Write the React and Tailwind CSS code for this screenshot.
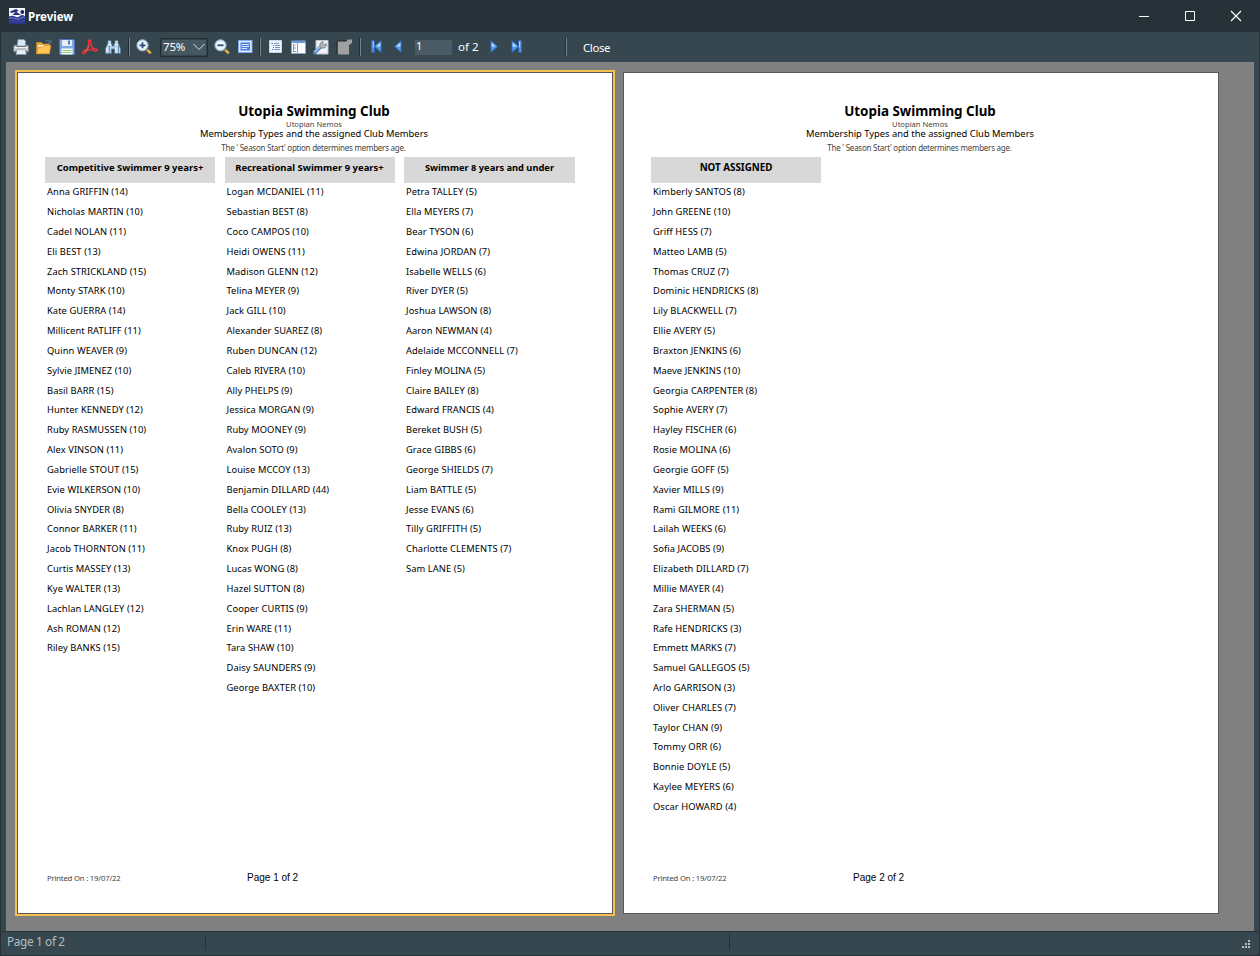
import React from "react";

const competitive = "Anna GRIFFIN (14)|Nicholas MARTIN (10)|Cadel NOLAN (11)|Eli BEST (13)|Zach STRICKLAND (15)|Monty STARK (10)|Kate GUERRA (14)|Millicent RATLIFF (11)|Quinn WEAVER (9)|Sylvie JIMENEZ (10)|Basil BARR (15)|Hunter KENNEDY (12)|Ruby RASMUSSEN (10)|Alex VINSON (11)|Gabrielle STOUT (15)|Evie WILKERSON (10)|Olivia SNYDER (8)|Connor BARKER (11)|Jacob THORNTON (11)|Curtis MASSEY (13)|Kye WALTER (13)|Lachlan LANGLEY (12)|Ash ROMAN (12)|Riley BANKS (15)".split("|");
const recreational = "Logan MCDANIEL (11)|Sebastian BEST (8)|Coco CAMPOS (10)|Heidi OWENS (11)|Madison GLENN (12)|Telina MEYER (9)|Jack GILL (10)|Alexander SUAREZ (8)|Ruben DUNCAN (12)|Caleb RIVERA (10)|Ally PHELPS (9)|Jessica MORGAN (9)|Ruby MOONEY (9)|Avalon SOTO (9)|Louise MCCOY (13)|Benjamin DILLARD (44)|Bella COOLEY (13)|Ruby RUIZ (13)|Knox PUGH (8)|Lucas WONG (8)|Hazel SUTTON (8)|Cooper CURTIS (9)|Erin WARE (11)|Tara SHAW (10)|Daisy SAUNDERS (9)|George BAXTER (10)".split("|");
const juniors = "Petra TALLEY (5)|Ella MEYERS (7)|Bear TYSON (6)|Edwina JORDAN (7)|Isabelle WELLS (6)|River DYER (5)|Joshua LAWSON (8)|Aaron NEWMAN (4)|Adelaide MCCONNELL (7)|Finley MOLINA (5)|Claire BAILEY (8)|Edward FRANCIS (4)|Bereket BUSH (5)|Grace GIBBS (6)|George SHIELDS (7)|Liam BATTLE (5)|Jesse EVANS (6)|Tilly GRIFFITH (5)|Charlotte CLEMENTS (7)|Sam LANE (5)".split("|");
const unassigned = "Kimberly SANTOS (8)|John GREENE (10)|Griff HESS (7)|Matteo LAMB (5)|Thomas CRUZ (7)|Dominic HENDRICKS (8)|Lily BLACKWELL (7)|Ellie AVERY (5)|Braxton JENKINS (6)|Maeve JENKINS (10)|Georgia CARPENTER (8)|Sophie AVERY (7)|Hayley FISCHER (6)|Rosie MOLINA (6)|Georgie GOFF (5)|Xavier MILLS (9)|Rami GILMORE (11)|Lailah WEEKS (6)|Sofia JACOBS (9)|Elizabeth DILLARD (7)|Millie MAYER (4)|Zara SHERMAN (5)|Rafe HENDRICKS (3)|Emmett MARKS (7)|Samuel GALLEGOS (5)|Arlo GARRISON (3)|Oliver CHARLES (7)|Taylor CHAN (9)|Tommy ORR (6)|Bonnie DOYLE (5)|Kaylee MEYERS (6)|Oscar HOWARD (4)".split("|");

function Icon({ children, className = "" }) {
  return (
    <svg viewBox="0 0 16 16" className={"h-4 w-4 shrink-0 " + className}>
      {children}
    </svg>
  );
}

function Separator({ className }) {
  return <div className={"h-[18px] w-[2px] shrink-0 border-l border-[#222e34] bg-[#71828b] " + className} />;
}

function Logo() {
  return (
    <Icon>
      <rect width="16" height="16" fill="#f4f6fb" />
      <path d="M0 8.500 Q3 7 6 8.500 T11 8 T16 8.500 V16 H0Z" fill="#2c3590" />
      <path d="M0 10.500 Q3 8.800 6 10.500 T12 10 T16 10.500" stroke="#8d95d0" strokeWidth=".8" fill="none" />
      <path d="M0 13.500 Q3 12 7 13 T16 12.500" stroke="#4a53a8" strokeWidth=".8" fill="none" />
      <path d="M1 3.500 L7 1 L9.500 2.500 L7.500 4 L12 7 L3.500 7 L6.500 4 L2 5Z" fill="#272f7c" />
      <circle cx="13.300" cy="4" r="1.900" fill="#1b2266" />
    </Icon>
  );
}

function Printer() {
  return (
    <Icon>
      <path d="M4 7 L5 .5 H11 L12.500 2 V7Z" fill="#d3e9fc" stroke="#7098bd" strokeWidth=".7" />
      <path d="M.5 8 Q.5 6 2.500 6 H4 V8 H12.500 V6 H14 Q15.700 6 15.700 8 V13 H.5Z" fill="#c3c7ca" stroke="#65696c" strokeWidth=".7" />
      <path d="M1.500 8.500 H14.700 M1.500 10.500 H14.700" stroke="#eff1f2" />
      <path d="M4 10.500 H12.300 L13.300 15.500 H3Z" fill="#e4f0fa" stroke="#8799a8" strokeWidth=".7" />
      <path d="M5 7.500H12M1.500 12H3.500M13 12H15" stroke="#777" />
    </Icon>
  );
}

function OpenFolder() {
  return (
    <Icon>
      <path d="M.5 14.500 V3.500 H5.500 L7 5 H13.500 V14.500Z" fill="#e5a83c" stroke="#c98722" strokeWidth=".7" />
      <path d="M2 6 H12.500 V12 H2Z" fill="#fff4cc" />
      <path d="M.5 14.700 L2.700 8 H6.500 L8 6.500 H14.800 L13.300 14.700Z" fill="#ffc65a" stroke="#df9625" strokeWidth=".8" />
      <path d="M9.500 2 Q12 .3 14 2.700 M14.800 .8 V4 H12" fill="none" stroke="#52799b" strokeWidth="1" />
    </Icon>
  );
}

function Save() {
  return (
    <Icon>
      <path d="M.5 .5 H14.500 L15.500 1.500 V15.500 H.5Z" fill="#7fa6e2" stroke="#4a74b6" />
      <path d="M3 1 H13 V7 H3Z" fill="#e4edf8" />
      <rect x="9" y="1.500" width="2" height="4" fill="#517dbf" />
      <rect x="2.500" y="9.500" width="11" height="6" fill="#f8fff6" />
      <path d="M3.500 11.500 H12.500 M3.500 13.500 H12.500" stroke="#91c97a" />
    </Icon>
  );
}

function Pdf() {
  return (
    <Icon>
      <path d="M1 14.500 Q-.3 12.500 4.500 10.500 Q7.500 6 6.500 1.800 Q7.500 .2 8.400 1.500 Q8.400 6.500 11 9.500 Q15.600 9.500 15 11.700 Q13 13 10 10.300 L5 11.200 Q2.500 15.700 1 14.500Z" fill="none" stroke="#e53535" strokeWidth="1.500" />
      <path d="M5.500 10.300 L8 6 M3 12.500 L5 11" stroke="#ff8373" strokeWidth=".6" />
    </Icon>
  );
}

function Binoculars() {
  return (
    <Icon>
      <path d="M3 1.500 H6 V4 L7 5 V7 H9 V5 L10 4 V1.500 H13 V4 L15.500 9.500 V14.500 H9.500 V10 H6.500 V14.500 H.5 V9.500 L3 4Z" fill="#b4d4ec" stroke="#557894" strokeWidth=".8" />
      <path d="M3.500 3 H5.500 M10.500 3 H12.500 M3 5.500 H6 M10 5.500 H13 M2 8.500 V13 M11 8.500 V13" stroke="#eff9ff" strokeWidth="1" />
      <path d="M4.500 7 V14 M13.500 7 V14" stroke="#7197b2" />
    </Icon>
  );
}

function Magnifier({ plus, className }) {
  return (
    <Icon className={className}>
      <path d="M10.500 10.500 L14.500 14.500" stroke="#916525" strokeWidth="3" />
      <path d="M11.500 11 L14.800 14.300" stroke="#e8bd5f" strokeWidth="2" />
      <circle cx="6.500" cy="6.300" r="5.600" fill="#cfe3f6" stroke="#9fb8cc" strokeWidth="1" />
      <circle cx="6.500" cy="6.300" r="4.200" fill="#edf7ff" />
      <path d={plus ? "M3.500 6.300 H9.500 M6.500 3.300 V9.300" : "M3.500 6.300 H9.500"} stroke="#294b77" strokeWidth="1.800" />
    </Icon>
  );
}

function FitPage() {
  return (
    <Icon className="ml-[8px]">
      <rect x=".5" y="1.500" width="13.500" height="12" fill="#dcecff" stroke="#7fabe8" />
      <rect x="2.500" y="3.500" width="9.500" height="8" fill="#4a7edf" />
      <path d="M3.500 5.500 H11 M3.500 7.500 H11 M3.500 9.500 H9" stroke="#d4e5ff" strokeWidth="1" />
    </Icon>
  );
}

function Outline() {
  return (
    <Icon className="ml-[6px]">
      <path d="M2.500 1.500 H14.500 V13.500 H2.500Z" fill="#eef4fb" stroke="#c9d6e6" />
      <path d="M7 4.500 H12 M8 6.500 H13 M8 8.500 H13 M7 10.500 H13" stroke="#7798c5" />
      <path d="M4.500 4.500 H6 M6 6.500 H7 M6 8.500 H7 M5 10.500 H6" stroke="#416fb5" />
    </Icon>
  );
}

function Thumbnails() {
  return (
    <Icon className="ml-[7px]">
      <path d="M1.500 2 H15.500 V14.500 H1.500Z" fill="#f6faff" stroke="#87a9cd" />
      <path d="M1 3 H16" stroke="#669bd8" strokeWidth="2" />
      <path d="M7.500 4 V14" stroke="#83a5ca" />
      <path d="M3.500 5.500 V13 M3 6 H5.500 M3.500 9 H6 M3.500 12.500 H6" stroke="#708397" strokeWidth=".8" fill="none" />
      <path d="M9 5 H14.500 V13.500 H9Z" fill="#fff" />
    </Icon>
  );
}

function PageSetup() {
  return (
    <Icon className="ml-[7px]">
      <path d="M3 1.500 H15 V15 H3Z" fill="#f0f2f5" stroke="#bcc6d0" />
      <path d="M1.500 13.700 L7.500 8" stroke="#4e7db5" strokeWidth="3.400" strokeLinecap="round" />
      <path d="M1.500 13 L7.500 7.500" stroke="#a9d0fc" strokeWidth="1.600" />
      <path d="M7 7.500 V4.500 L9.500 2.500 L10.500 3 L9.500 5 L11 6 L13 4.500 L13.500 6.500 L11.500 9 H8.500Z" fill="#b4b8bc" stroke="#7a8086" strokeWidth=".9" />
    </Icon>
  );
}

function EditPage() {
  return (
    <Icon className="ml-[7px]">
      <path d="M1.500 2 H12.500 V15 H1.500Z" fill="#a0a0a0" />
      <path d="M1 15 V2 H11.500" fill="none" stroke="#252525" />
      <path d="M11.500 .5 H16 V4 L13 6 V15.500 H2.500 V3.500 H10Z" fill="#a0a0a0" />
    </Icon>
  );
}

function Arrow({ left, bar, className }) {
  return (
    <Icon className={className}>
      <g transform={left ? "translate(16 0) scale(-1 1)" : undefined}>
        <path d={bar ? "M3 1.800 L9.500 7.500 L3 13.200Z" : "M5 1.800 L11.300 7.500 L5 13.200Z"} fill="#599ded" stroke="#2f6cc8" />
        <path d={bar ? "M3.600 3.500 L7.800 7.300 L3.600 7.800Z" : "M5.600 3.500 L9.600 7.300 L5.600 7.800Z"} fill="#b2ddff" />
        {bar && <path d="M9.700 1.500 H12.500 V13.500 H9.700Z" fill="#4d8ee4" stroke="#2f6cc8" strokeWidth=".7" />}
        {bar && <path d="M10.600 2.500 V8.500" stroke="#b2ddff" />}
      </g>
    </Icon>
  );
}

function Column({ title, names, width = "w-[170px]", heading = "text-[9.5px]" }) {
  return (
    <section className={"shrink-0 " + width}>
      <h2 className={"h-[26px] bg-[#d8d8d8] text-center leading-[22px] font-bold whitespace-nowrap " + heading}>
        {title}
      </h2>
      <ul className="pt-[0.300px] pl-[2px]">
        {names.map((name) => (
          <li key={name} className="h-[19.840px] text-[9.330px] leading-[17px] tracking-[0.08px] whitespace-nowrap">{name}</li>
        ))}
      </ul>
    </section>
  );
}

function Page({ number, selected, children }) {
  return (
    <article className={"flex h-[842px] w-[596px] shrink-0 flex-col border border-[#595959] bg-white font-['Noto_Sans',sans-serif] text-black " + (selected ? "outline-2 outline-[#f3c24e]" : "")}>
      <header className="flex h-[84px] flex-col items-center pt-[29px] pr-[2px] text-center whitespace-nowrap">
        <h1 className="h-[18px] text-[13.400px] leading-[18px] font-bold">Utopia Swimming Club</h1>
        <p className="h-[8px] text-[7.600px] leading-[8px] text-[#444]">Utopian Nemos</p>
        <p className="h-[12px] text-[9.370px] leading-[12px]">Membership Types and the assigned Club Members</p>
        <p className="mt-[2px] h-[12px] pr-px text-[8px] leading-[11px] tracking-[-0.250px] text-[#444]">The ' Season Start' option determines members age.</p>
      </header>
      <div className="flex flex-1 gap-[9.500px] pl-[27px]">{children}</div>
      <footer className="flex h-[45px] shrink-0 items-start pl-[29px] whitespace-nowrap">
        <span className="w-[200px] text-[7.700px] leading-[20px] tracking-[-0.180px] text-[#444]">Printed On : 19/07/22</span>
        <span className="font-['Liberation_Sans',sans-serif] text-[10px] leading-[20px]">Page {number} of 2</span>
      </footer>
    </article>
  );
}

export default function App() {
  return (
    <main className="flex h-[956px] w-[1260px] flex-col overflow-hidden border-r border-b border-l border-[#263238] bg-[#37474f] font-['Noto_Sans',sans-serif] text-white">
      <div className="flex h-8 shrink-0 items-center bg-[#263238] pl-2">
        <Logo />
        <span className="ml-[3px] pt-[2px] text-[11.500px] font-bold">Preview</span>
        <div className="-mr-px ml-auto flex items-center">
          <svg className="h-8 w-[46px]" viewBox="0 0 46 32" fill="none" stroke="white"><path d="M17 16.500 H27" /></svg>
          <svg className="h-8 w-[46px]" viewBox="0 0 46 32" fill="none" stroke="white"><path d="M17.500 11.500 H26.500 V20.500 H17.500Z" /></svg>
          <svg className="h-8 w-[46px]" viewBox="0 0 46 32" fill="none" stroke="white" strokeWidth="1.200"><path d="M17 11 L27 21 M27 11 L17 21" /></svg>
        </div>
      </div>
      <div className="flex h-[30px] shrink-0 items-center pl-3 text-[11px] whitespace-nowrap">
        <div className="flex gap-[7px]"><Printer /><OpenFolder /><Save /><Pdf /><Binoculars /></div>
        <Separator className="ml-[7px]" />
        <Magnifier plus className="ml-[6px]" />
        <button className="ml-[8px] flex h-[19px] w-12 items-center justify-between border border-[#222e34] bg-[#455760] pr-[2px] pl-[2px] outline-1 -outline-offset-2 outline-[#35444c]">
          <span className="text-[11.500px] tracking-[-0.150px]">75%</span>
          <svg viewBox="0 0 12 8" className="h-2 w-3" fill="none" stroke="#d9e2e6"><path d="M.5 1 L6 6.500 L11.500 1" /></svg>
        </button>
        <Magnifier className="ml-[6px]" />
        <FitPage />
        <Separator className="ml-[5px]" />
        <Outline /><Thumbnails /><PageSetup /><EditPage />
        <Separator className="ml-[7px]" />
        <Arrow left bar className="ml-[7px]" />
        <Arrow left className="ml-[6px]" />
        <span className="ml-[9px] h-[15px] w-[37px] bg-[#4b5b64] pl-px leading-[14px]"><span className="relative -top-px">1</span></span>
        <span className="ml-[6px] w-[22px] pb-px text-[11.500px]">of 2</span>
        <Arrow className="ml-[6px]" />
        <Arrow bar className="ml-[7px]" />
        <Separator className="ml-[40px]" />
        <span className="ml-[16px] pt-[2px] text-[11.300px] tracking-[-0.300px]">Close</span>
      </div>
      <div className="mx-[5px] flex h-[869px] shrink-0 items-start gap-[10px] bg-[#808080] pt-[10px] pl-[11px]">
        <Page number="1" selected>
          <Column title="Competitive Swimmer 9 years+" names={competitive} />
          <Column title="Recreational Swimmer 9 years+" names={recreational} />
          <Column title="Swimmer 8 years and under" names={juniors} width="w-[171px]" heading="text-[9.3px]" />
        </Page>
        <Page number="2">
          <Column title="NOT ASSIGNED" names={unassigned} heading="text-[9.8px]" />
        </Page>
      </div>
      <footer className="flex flex-1 items-center border-t border-[#263238] pb-[3px] pl-[6px] text-[11.800px] tracking-[-0.350px] text-[#b4bec3]">
        <span className="w-[198px]">Page 1 of 2</span>
        <div className="h-4 w-px bg-[#263238]" />
        <div className="ml-[523px] h-4 w-px bg-[#263238]" />
        <svg viewBox="0 0 8 8" className="mt-1 mr-[9px] ml-auto h-2 w-2" fill="#b4bec3">
          <path d="M6 0h2v2H6zM3 3h2v2H3zM6 3h2v2H6zM0 6h2v2H0zM3 6h2v2H3zM6 6h2v2H6z" />
        </svg>
      </footer>
    </main>
  );
}
